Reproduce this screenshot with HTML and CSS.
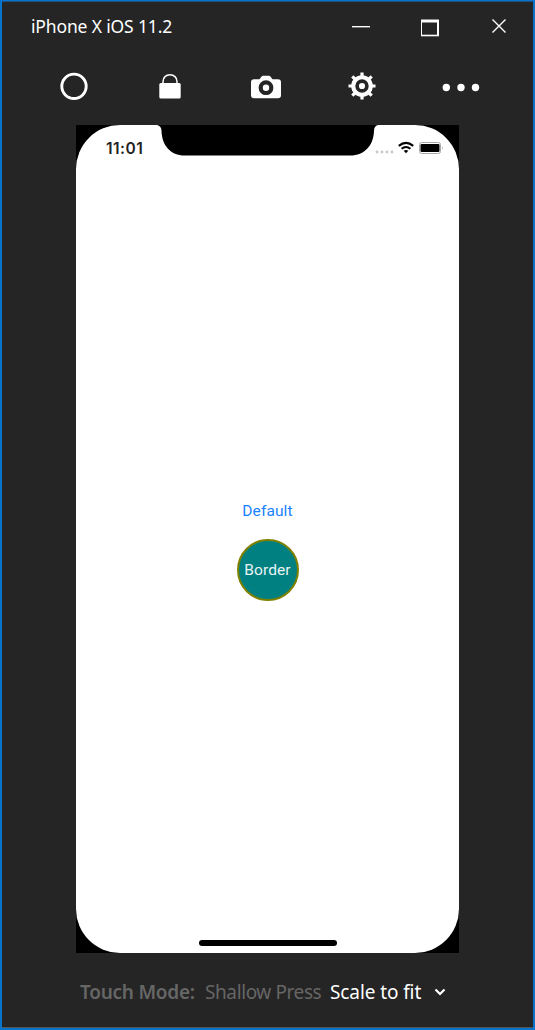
FILE: index.html
```html
<!DOCTYPE html>
<html lang="en">
<head>
<meta charset="utf-8">
<title>iPhone X iOS 11.2</title>
<link rel="stylesheet" href="styles.css">
</head>
<body>
<div class="window">
  <header class="titlebar">
    <span class="title">iPhone X iOS 11.2</span>
    <svg class="controls" width="160" height="24" viewBox="0 0 160 24" fill="none" stroke="#fff">
      <path d="M2 12.500h18"/><path d="M2 13.500h18" stroke="#777"/>
      <path d="M71.500 6v15.500h16V6" /><path d="M71 7h18" stroke-width="3"/><path d="M88.500 6v16"/><path d="M71 21.500h18"/><path d="M71 22.500h18M72 20.500h15" stroke="#666"/>
      <path d="M142.500 5.500l13 13m0-13l-13 13" stroke-width="1.400"/>
    </svg>
  </header>
  <nav class="toolbar">
    <svg width="30" height="30" viewBox="0 0 30 30"><circle cx="15" cy="15.300" r="12.200" fill="none" stroke="#fff" stroke-width="2.900"/></svg>
    <svg width="30" height="30" viewBox="0 0 30 30"><rect x="4.300" y="12" width="21.400" height="15.500" rx="1.500" fill="#fff"/><path d="M8 13V10.500c0-4 3-6.800 7-6.800s7 2.800 7 6.800V13" fill="none" stroke="#fff" stroke-width="1.500"/></svg>
    <svg width="30" height="30" viewBox="0 0 30 30"><path d="M3 8.300h5.500l1.500-2q.7-1.500 2-1.500h6q1.300 0 2 1.500l1.500 2H27q3 0 3 3v13q0 3-3 3H3q-3 0-3-3v-13q0-3 3-3z" fill="#fff"/><circle cx="15" cy="16.700" r="5.300" fill="none" stroke="#252525" stroke-width="4.200"/></svg>
    <svg class="gear" width="30" height="30" viewBox="0 0 30 30"><g stroke="#fff" stroke-width="3.200"><path d="M15 1.500v27M1.500 15h27M5.300 5.300l19.400 19.400M24.700 5.300L5.300 24.700"/></g><circle cx="15" cy="15" r="10.800" fill="#fff"/><circle cx="15" cy="15" r="4.900" fill="none" stroke="#252525" stroke-width="3.600"/></svg>
    <svg width="38" height="30" viewBox="0 0 38 30" fill="#fff"><circle cx="4.300" cy="16.500" r="3.700"/><circle cx="19" cy="16.500" r="3.700"/><circle cx="33.500" cy="16.500" r="3.700"/></svg>
  </nav>
  <main class="device">
    <div class="screen">
      <div class="status">
        <span class="time">11:01</span>
        <svg width="72" height="18" viewBox="0 0 72 18">
          <g fill="#c8c8c8"><circle cx="3" cy="13" r="1.400"/><circle cx="8" cy="13" r="1.400"/><circle cx="13" cy="13" r="1.400"/><circle cx="18" cy="13" r="1.400"/></g>
          <g fill="none" stroke="#000" stroke-width="2.100"><path d="M24.800 6.900q7.200-6 14.400 0"/><path d="M27.600 9.800q4.400-3.600 8.800 0"/></g>
          <path d="M29.700 11.700q2.300-1.500 4.600 0L32 14.200z"/>
          <rect x="45.500" y="3.500" width="21" height="11" rx="2" fill="#fff" stroke="#aaa"/>
          <rect x="46.500" y="5" width="19" height="8" rx="1"/>
          <path d="M68.200 7.500q1.500 1.500 0 3z" fill="#888"/>
        </svg>
      </div>
      <button class="plain">Default</button>
      <button class="round">Border</button>
      <div class="home"></div>
    </div>
    <svg class="notch" width="221" height="32" viewBox="0 0 221 32"><path d="M0 0q4.500 1 4.500 6C5 20 13 30.500 28 30.500H193C208 30.500 216.500 20 217 6q0-5 4-6z"/></svg>
  </main>
  <footer class="footer">
    <span class="label">Touch Mode:</span>
    <span class="mode">Shallow Press</span>
    <span class="scale">Scale to fit</span>
    <svg width="12" height="10" viewBox="0 0 12 10"><path d="M1.500 2.500L6 7l4.500-4.500" fill="none" stroke="#fff" stroke-width="2.200"/></svg>
  </footer>
</div>
</body>
</html>
```
FILE: styles.css
```css
* { box-sizing: border-box; }
body { margin: 0; background: #0078d7; }
.window {
  width: 535px;
  height: 1030px;
  border: 2px solid #0873ca;
  border-top-width: 1px;
  background: #252525;
  box-shadow: inset 0 1px #205080, inset 0 -1px #555;
  color: #fff;
  font-family: "Noto Sans", "Open Sans", sans-serif;
  display: flex;
  flex-direction: column;
}
.titlebar {
  height: 52px;
  padding: 0 23px 0 29px;
  display: flex;
  justify-content: space-between;
  align-items: center;
}
.title { font-size: 17.5px; letter-spacing: -0.15px; white-space: nowrap; margin-top: -2px; }
.controls { margin-top: -2px; }
.toolbar {
  height: 72px;
  padding: 18px 53px 0 57px;
  display: flex;
  justify-content: space-between;
  align-items: flex-start;
}
.gear { margin: 0 -1px 0 1px; }
.device {
  position: relative;
  width: 383px;
  height: 828px;
  margin-left: 74px;
  background: #000;
  flex: none;
}
.screen {
  width: 383px;
  height: 828px;
  border-radius: 44px;
  background: #fff;
  display: flex;
  flex-direction: column;
  align-items: center;
  font-family: Inter, "Liberation Sans", sans-serif;
}
.notch { position: absolute; left: 81px; top: 0; }
.status {
  width: 100%;
  height: 46px;
  padding: 0 13px 0 30px;
  display: flex;
  justify-content: space-between;
  align-items: center;
  color: #222;
}
.time { font-size: 15.5px; font-weight: 600; letter-spacing: 0.5px; }
.plain, .round {
  border: 0;
  padding: 0;
  background: none;
  font-family: Roboto, sans-serif;
  font-size: 15.5px;
  letter-spacing: 0.1px;
}
.plain { height: 20px; margin-top: 330px; color: #1a82ff; }
.round {
  width: 62px;
  height: 62px;
  margin-top: 18px;
  border: 2px solid #808000;
  border-radius: 50%;
  background: #008080;
  color: #e8f4f4;
}
.home {
  width: 138px;
  height: 6px;
  margin-top: auto;
  margin-bottom: 7px;
  border-radius: 3px;
  background: #000;
}
.footer {
  flex: 1;
  padding: 2px 0 0 78px;
  display: flex;
  align-items: center;
  font-size: 19px;
  white-space: nowrap;
}
.label { width: 125px; font-weight: 600; color: #666; letter-spacing: -0.25px; }
.mode { width: 125px; color: #666; letter-spacing: -0.4px; }
.scale { width: 104px; letter-spacing: -0.1px; }
```
